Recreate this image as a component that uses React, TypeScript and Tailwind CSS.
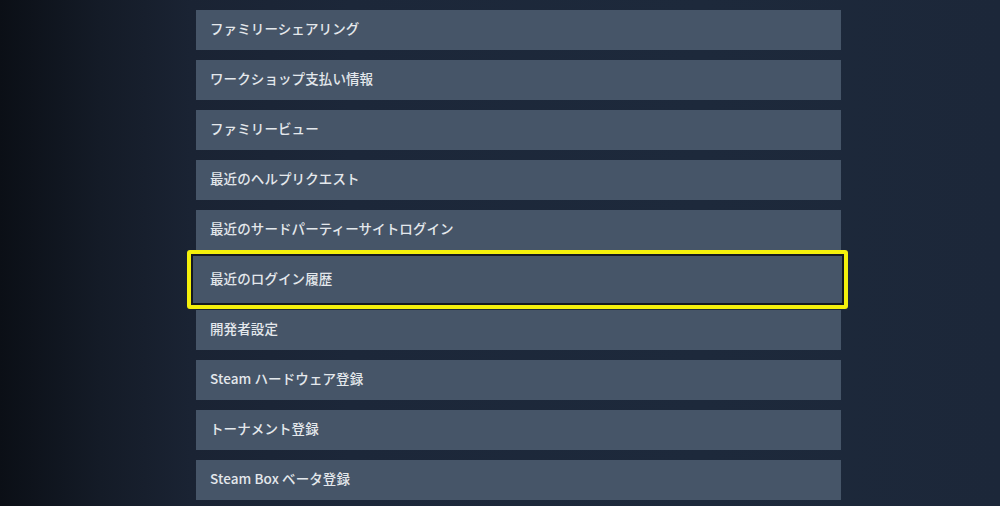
const items = [
  "",
  "ファミリーシェアリング",
  "ワークショップ支払い情報",
  "ファミリービュー",
  "最近のヘルプリクエスト",
  "最近のサードパーティーサイトログイン",
  "最近のログイン履歴",
  "開発者設定",
  "Steam ハードウェア登録",
  "トーナメント登録",
  "Steam Box ベータ登録",
];

const highlighted = "最近のログイン履歴";

function Row({ label }: { label: string }) {
  const active = label === highlighted;
  return (
    <div className="relative h-[40px] bg-[#465568] flex items-center px-[14px] pb-[3px]">
      {active && (
        <div className="absolute top-[-10px] bottom-[-9px] left-[-9px] right-[-7px] rounded-[3px] border-[4px] border-[#f4f00c] bg-[#465568] shadow-[inset_0_0_0_2px_#15191f]" />
      )}
      <span className="relative z-10 text-[13.5px] font-medium text-[#e4e8ec] tracking-[0.1px]">
        {label}
      </span>
    </div>
  );
}

export default function App() {
  return (
    <div
      className="w-[1000px] h-[506px] overflow-hidden bg-[linear-gradient(to_right,#0b0f16_0%,#141b27_10%,#1a2333_19%,#1c2739_35%,#1d293b_70%,#1c2739_100%)]"
      style={{ fontFamily: '"Noto Sans CJK JP", "Noto Sans", sans-serif' }}
    >
      <div className="ml-[196px] w-[645px] mt-[-40px] flex flex-col gap-[10px]">
        {items.map((label, i) => (
          <Row key={i} label={label} />
        ))}
      </div>
    </div>
  );
}
